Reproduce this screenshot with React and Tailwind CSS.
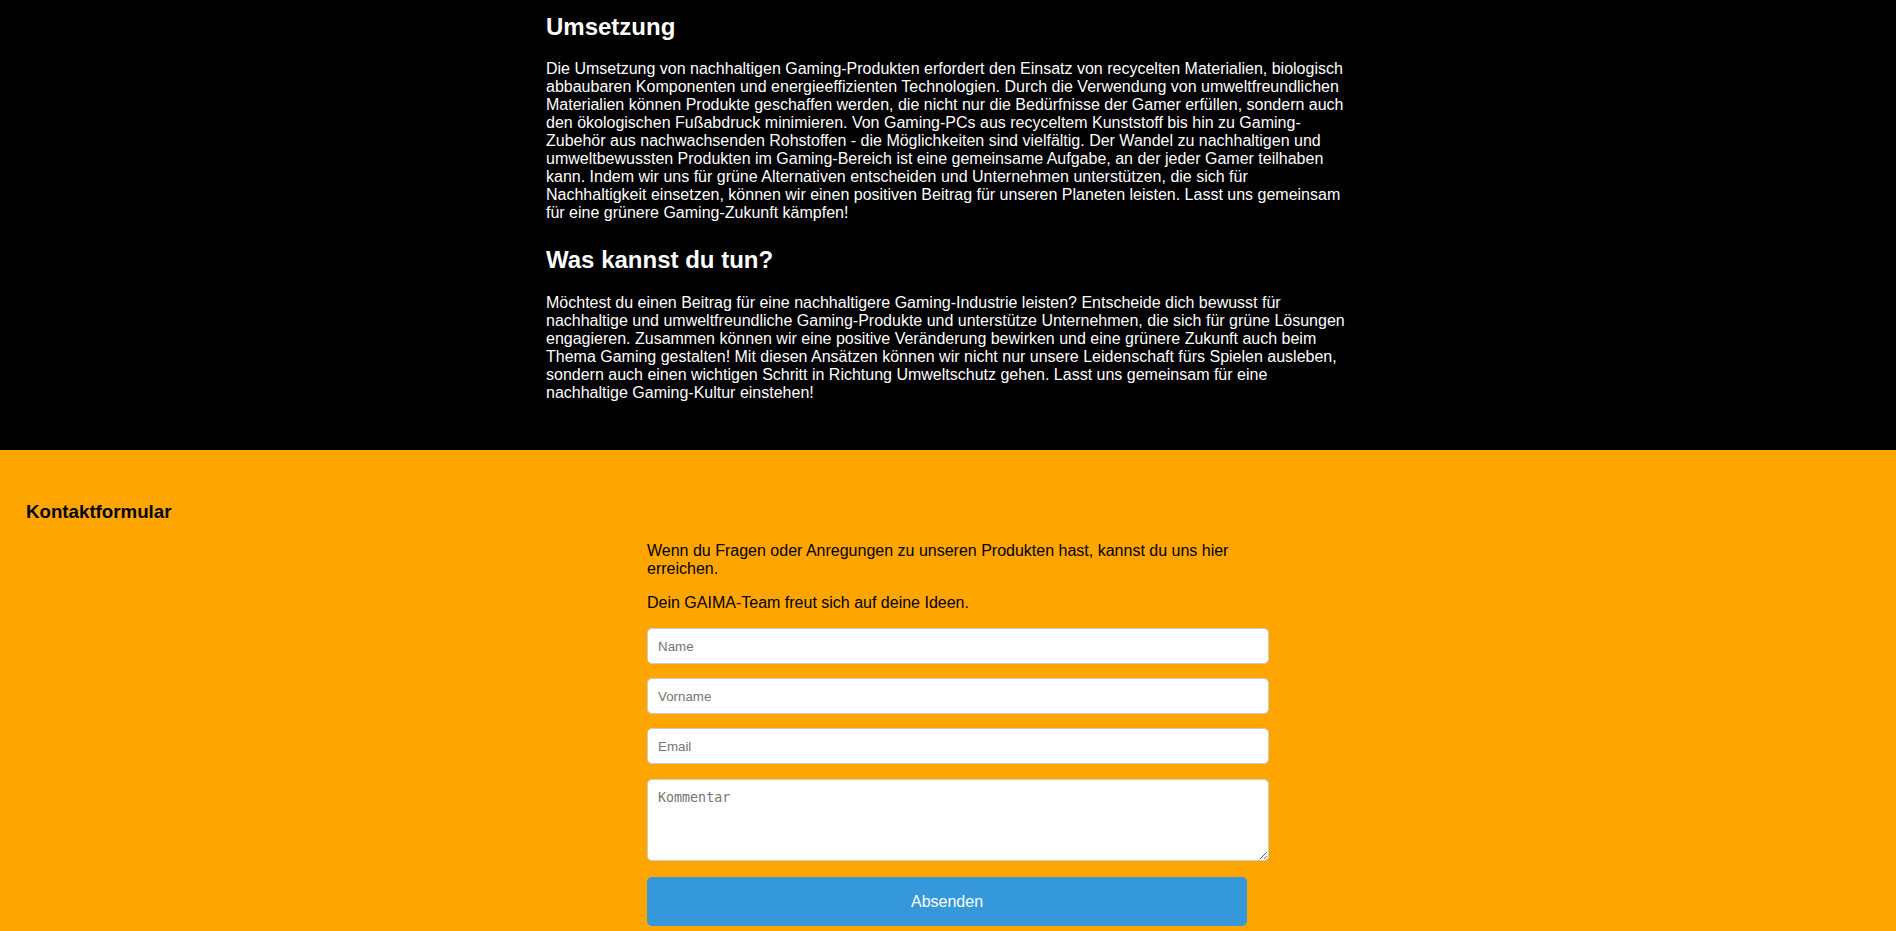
export default function App() {
  return (
    <div className="min-h-screen font-['Liberation_Sans',Arial,sans-serif]">
      <section className="bg-black text-white pt-[13px] pb-[32px]">
        <div className="w-[804px] mx-auto">
          <h2 className="text-[24px] leading-[normal] font-bold mb-[19px]">Umsetzung</h2>
          <p className="text-[16px] leading-[normal] mb-[24px]">
            Die Umsetzung von nachhaltigen Gaming-Produkten erfordert den Einsatz von recycelten Materialien, biologisch abbaubaren Komponenten und energieeffizienten Technologien. Durch die Verwendung von umweltfreundlichen Materialien können Produkte geschaffen werden, die nicht nur die Bedürfnisse der Gamer erfüllen, sondern auch den ökologischen Fußabdruck minimieren. Von Gaming-PCs aus recyceltem Kunststoff bis hin zu Gaming-Zubehör aus nachwachsenden Rohstoffen - die Möglichkeiten sind vielfältig. Der Wandel zu nachhaltigen und umweltbewussten Produkten im Gaming-Bereich ist eine gemeinsame Aufgabe, an der jeder Gamer teilhaben kann. Indem wir uns für grüne Alternativen entscheiden und Unternehmen unterstützen, die sich für Nachhaltigkeit einsetzen, können wir einen positiven Beitrag für unseren Planeten leisten. Lasst uns gemeinsam für eine grünere Gaming-Zukunft kämpfen!
          </p>
          <h2 className="text-[24px] leading-[normal] font-bold mb-[20px]">Was kannst du tun?</h2>
          <p className="text-[16px] leading-[normal] mb-[16px]">
            Möchtest du einen Beitrag für eine nachhaltigere Gaming-Industrie leisten? Entscheide dich bewusst für nachhaltige und umweltfreundliche Gaming-Produkte und unterstütze Unternehmen, die sich für grüne Lösungen engagieren. Zusammen können wir eine positive Veränderung bewirken und eine grünere Zukunft auch beim Thema Gaming gestalten! Mit diesen Ansätzen können wir nicht nur unsere Leidenschaft fürs Spielen ausleben, sondern auch einen wichtigen Schritt in Richtung Umweltschutz gehen. Lasst uns gemeinsam für eine nachhaltige Gaming-Kultur einstehen!
          </p>
        </div>
      </section>

      <section className="bg-[#ffa500] text-black pt-[51px] pb-[40px]">
        <h3 className="pl-[26px] text-[18.72px] leading-[normal] font-bold mb-[19px]">Kontaktformular</h3>
        <div className="w-[602px] mx-auto text-[16px] leading-[normal]">
          <p className="mb-[16px]">
            Wenn du Fragen oder Anregungen zu unseren Produkten hast, kannst du uns hier erreichen.
          </p>
          <p className="mb-[16px]">Dein GAIMA-Team freut sich auf deine Ideen.</p>
          <form className="flex flex-col items-start" onSubmit={(e) => e.preventDefault()}>
            <input
              type="text"
              placeholder="Name"
              className="w-[622px] h-[36px] mb-[14px] px-[10px] bg-white border border-[#ccc] rounded-[5px] text-[13.33px] placeholder:text-[#757575]"
            />
            <input
              type="text"
              placeholder="Vorname"
              className="w-[622px] h-[36px] mb-[14px] px-[10px] bg-white border border-[#ccc] rounded-[5px] text-[13.33px] placeholder:text-[#757575]"
            />
            <input
              type="email"
              placeholder="Email"
              className="w-[622px] h-[36px] mb-[15px] px-[10px] bg-white border border-[#ccc] rounded-[5px] text-[13.33px] placeholder:text-[#757575]"
            />
            <textarea
              placeholder="Kommentar"
              className="w-[622px] h-[82px] mb-[16px] p-[10px] bg-white border border-[#ccc] rounded-[5px] text-[13.33px] leading-[normal] font-['DejaVu_Sans_Mono',monospace] placeholder:text-[#757575]"
            />
            <button
              type="submit"
              className="w-[600px] h-[49px] bg-[#3498db] text-white text-[16px] leading-[normal] rounded-[5px]"
            >
              Absenden
            </button>
          </form>
        </div>
      </section>
    </div>
  )
}
